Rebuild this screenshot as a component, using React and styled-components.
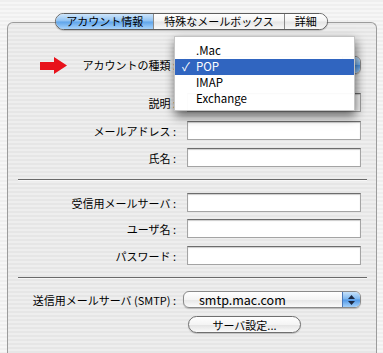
import styled, { createGlobalStyle } from 'styled-components'

const GlobalStyle = createGlobalStyle`
  html, body {
    margin: 0;
    padding: 0;
    overflow: hidden;
  }
  body {
    width: 383px;
    height: 353px;
    font-family: "Noto Sans CJK JP", "Noto Sans", sans-serif;
    color: #000;
    background: repeating-linear-gradient(to bottom, #efefef 0 2px, #f6f6f6 2px 4px);
  }
`

const Window = styled.div`
  display: flex;
  flex-direction: column;
  height: 353px;
  padding-top: 13px;
  box-sizing: border-box;
`

const TabBar = styled.div`
  display: flex;
  align-self: center;
  height: 17px;
  box-sizing: border-box;
  border: 1px solid #5e5e5e;
  border-radius: 9px;
  overflow: hidden;
  position: relative;
  z-index: 1;
  box-shadow: 0 1px 1px rgba(0, 0, 0, 0.2);
`

const Tab = styled.div`
  padding: 0 10px;
  font-size: 11px;
  line-height: 15px;
  white-space: nowrap;
  background: ${p => p.$active
    ? 'linear-gradient(#cfe6fb, #8cc0f2 48%, #5ea4ea 52%, #a7d3fb)'
    : 'linear-gradient(#ffffff, #f3f3f3 48%, #e4e4e4 52%, #f9f9f9)'};
  & + & {
    border-left: 1px solid #8a8a8a;
  }
`

const Panel = styled.div`
  flex: 1;
  margin: -8px 6px 0 7px;
  padding-top: 33px;
  border: 1px solid #9c9c9c;
  border-bottom: none;
  border-radius: 6px 6px 0 0;
  background: repeating-linear-gradient(to bottom, #e6e6e6 0 2px, #eeeeee 2px 4px);
`

const Row = styled.div`
  display: flex;
  align-items: center;
  height: ${p => p.$h || 19}px;
  margin-top: ${p => p.$mt || 0}px;
`

const Label = styled.div`
  display: flex;
  align-items: center;
  justify-content: flex-end;
  width: 168px;
  flex-shrink: 0;
  font-size: 11px;
  white-space: pre;
`

const Arrow = styled.svg`
  margin-right: 15px;
`

const TextField = styled.input`
  width: 174px;
  height: 19px;
  margin: 0 0 0 11px;
  padding: 0;
  box-sizing: border-box;
  border: 1px solid #a4a4a4;
  border-top-color: #6c6c6c;
  background: #fff;
  box-shadow: inset 0 1px 1px rgba(0, 0, 0, 0.2);
  outline: none;
`

const Separator = styled.div`
  margin: ${p => p.$mt}px 9px 0 10px;
  height: 1px;
  background: #6a6a6a;
  border-bottom: 1px solid #f7f7f7;
`

const Popup = styled.div`
  position: relative;
  display: flex;
  align-items: center;
  width: 178px;
  height: 100%;
  margin-left: 7px;
  box-sizing: border-box;
  border: 1px solid #8a8a8a;
  border-radius: 6px;
  background: linear-gradient(#ffffff, #f4f4f4 50%, #e6e6e6 52%, #fbfbfb);
  box-shadow: 0 1px 1px rgba(0, 0, 0, 0.2);
`

const PopupText = styled.span`
  flex: 1;
  padding-left: 15px;
  font-size: 12.5px;
`

const Stepper = styled.div`
  display: flex;
  align-items: center;
  justify-content: center;
  width: 17px;
  align-self: stretch;
  border-left: 1px solid #4a78b8;
  border-radius: 0 5px 5px 0;
  background: linear-gradient(#c5e1fb, #7cb6ef 48%, #4f97e6 52%, #a4d1fb);
`

const Button = styled.div`
  display: flex;
  align-items: center;
  justify-content: center;
  width: 113px;
  height: 100%;
  margin-left: 12px;
  box-sizing: border-box;
  border: 1px solid #6f6f6f;
  border-radius: 9px;
  font-size: 11px;
  background: linear-gradient(#ffffff, #f4f4f4 50%, #e3e3e3 52%, #fafafa);
  box-shadow: 0 1px 1px rgba(0, 0, 0, 0.2);
`

const Menu = styled.div`
  position: absolute;
  left: -10px;
  top: -21px;
  width: 181px;
  padding: 6px 0 3px;
  box-sizing: border-box;
  border: 1px solid #c4c4c4;
  background: rgba(255, 255, 255, 0.97);
  box-shadow: 1px 5px 10px rgba(0, 0, 0, 0.6);
  z-index: 2;
`

const MenuItem = styled.div`
  position: relative;
  height: 16px;
  line-height: 15px;
  padding-left: 21px;
  font-size: 11.5px;
  color: ${p => (p.$selected ? '#fff' : '#000')};
  background: ${p => (p.$selected ? '#3065c0' : 'transparent')};
`

const Check = styled.span`
  position: absolute;
  left: 7px;
  top: 0;
`

const StepperIcon = () => (
  <svg width="7" height="10" viewBox="0 0 7 10">
    <polygon points="3.5,0 7,4 0,4" fill="#1d2a44" />
    <polygon points="0,6 7,6 3.5,10" fill="#1d2a44" />
  </svg>
)

const menuItems = ['.Mac', 'POP', 'IMAP', 'Exchange']

const App = () => {
  return (
    <>
      <GlobalStyle />
      <Window>
        <TabBar>
          <Tab $active>アカウント情報</Tab>
          <Tab>特殊なメールボックス</Tab>
          <Tab>詳細</Tab>
        </TabBar>
        <Panel>
          <Row $h={18}>
            <Label>
              <Arrow width="27" height="17" viewBox="0 0 27 17">
                <polygon points="0,5 14,5 14,0 27,8.5 14,17 14,13 0,13" fill="#e8121b" />
              </Arrow>
              アカウントの種類 :
            </Label>
            <Popup>
              <PopupText>POP</PopupText>
              <Stepper><StepperIcon /></Stepper>
              <Menu>
                {menuItems.map(item => (
                  <MenuItem key={item} $selected={item === 'POP'}>
                    {item === 'POP' && <Check>✓</Check>}
                    {item}
                  </MenuItem>
                ))}
              </Menu>
            </Popup>
          </Row>
          <Row $mt={19}>
            <Label>説明 :</Label>
            <TextField readOnly />
          </Row>
          <Row $mt={9}>
            <Label>メールアドレス :</Label>
            <TextField readOnly />
          </Row>
          <Row $mt={8}>
            <Label>氏名 :</Label>
            <TextField readOnly />
          </Row>
          <Separator $mt={12} />
          <Row $mt={12}>
            <Label>受信用メールサーバ :</Label>
            <TextField readOnly />
          </Row>
          <Row $mt={7}>
            <Label>ユーザ名 :</Label>
            <TextField readOnly />
          </Row>
          <Row $mt={8}>
            <Label>パスワード :</Label>
            <TextField readOnly />
          </Row>
          <Separator $mt={12} />
          <Row $mt={12} $h={17}>
            <Label>送信用メールサーバ (SMTP) :</Label>
            <Popup>
              <PopupText>smtp.mac.com</PopupText>
              <Stepper><StepperIcon /></Stepper>
            </Popup>
          </Row>
          <Row $mt={8} $h={17}>
            <Label />
            <Button>サーバ設定...</Button>
          </Row>
        </Panel>
      </Window>
    </>
  )
}

export default App
